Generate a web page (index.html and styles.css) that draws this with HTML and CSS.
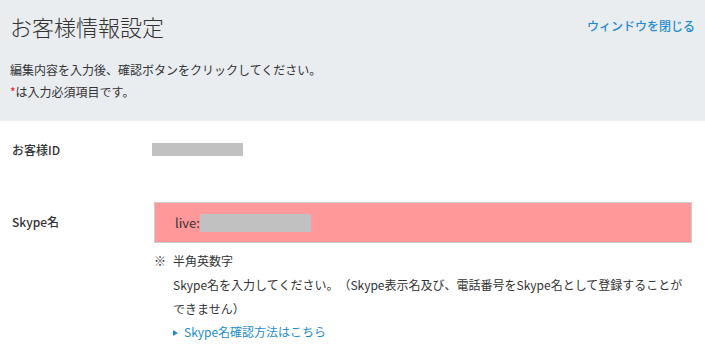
FILE: index.html
```html
<!DOCTYPE html>
<html lang="ja">
<head>
<meta charset="utf-8">
<link rel="stylesheet" href="styles.css">
</head>
<body>
<div class="head">
  <div class="head-top">
    <h1 class="title">お客様情報設定</h1>
    <a class="close">ウィンドウを閉じる</a>
  </div>
  <p class="lead">編集内容を入力後、確認ボタンをクリックしてください。</p>
  <p class="lead"><span class="req">*</span>は入力必須項目です。</p>
</div>
<div class="form">
  <div class="row row-id">
    <div class="label">お客様ID</div>
    <div class="value"><span class="mask mask-id"></span></div>
  </div>
  <div class="row row-skype">
    <div class="label">Skype名</div>
    <div class="value">
      <div class="input"><span class="prefix">live:</span><span class="mask mask-skype"></span></div>
      <div class="note"><span class="kome">※</span>半角英数字</div>
      <div class="desc">Skype名を入力してください。（Skype表示名及び、電話番号をSkype名として登録することができません）</div>
      <a class="help"><span class="tri"></span>Skype名確認方法はこちら</a>
    </div>
  </div>
</div>
</body>
</html>
```
FILE: styles.css
```css
html, body { margin: 0; padding: 0; }
body {
  font-family: "Noto Sans CJK JP", "Noto Sans", sans-serif;
  color: #333;
  background: #fff;
  font-size: 12px;
  text-spacing-trim: space-all;
}
.head {
  background: #e9edf0;
  height: 121px;
  box-sizing: border-box;
  padding: 10px 10px 0 10px;
}
.head-top {
  display: flex;
  justify-content: space-between;
  align-items: center;
  height: 32px;
}
.title {
  margin: 0;
  font-size: 22px;
  font-weight: 300;
  color: #333;
  line-height: 32px;
}
.close {
  color: #1d8bd0;
  font-size: 12px;
  font-weight: 500;
  margin-top: -1px;
}
.lead {
  margin: 0;
  line-height: 22px;
  font-size: 12px;
}
.lead:first-of-type { margin-top: 17px; }
.req { color: #e02020; }
.form { padding: 0 13px 0 12px; }
.row { display: flex; }
.label {
  width: 140px;
  font-weight: 500;
  flex: none;
}
.value { flex: 1; }
.row-id { padding-top: 20px; height: 60px; align-items: flex-start; }
.row-id .label { line-height: 18px; }
.mask { display: inline-block; background: #c1c1c1; }
.mask-id { width: 91px; height: 13px; margin-top: 2px; }
.row-skype { margin-top: 1px; }
.row-skype .label { padding-top: 11px; }
.row-skype .value { margin-left: 2px; }
.input {
  height: 41px;
  box-sizing: border-box;
  border: 1px solid #cccccc;
  background: #ff9999;
  display: flex;
  align-items: center;
  padding-left: 20px;
}
.prefix { font-size: 13px; color: #333; }
.mask-skype { width: 111px; height: 18px; }
.note { margin-top: 6px; line-height: 23px; }
.kome { display: inline-block; width: 19px; }
.desc { padding-left: 19px; line-height: 23.5px; margin-top: 1px; }
.help {
  display: block;
  padding-left: 19px;
  color: #1d8bd0;
  line-height: 23px;
  margin-top: 0;
}
.tri {
  display: inline-block;
  width: 0; height: 0;
  border-left: 5px solid #1d8bd0;
  border-top: 3.5px solid transparent;
  border-bottom: 3.5px solid transparent;
  margin-right: 6px;
  vertical-align: 1px;
}
```
